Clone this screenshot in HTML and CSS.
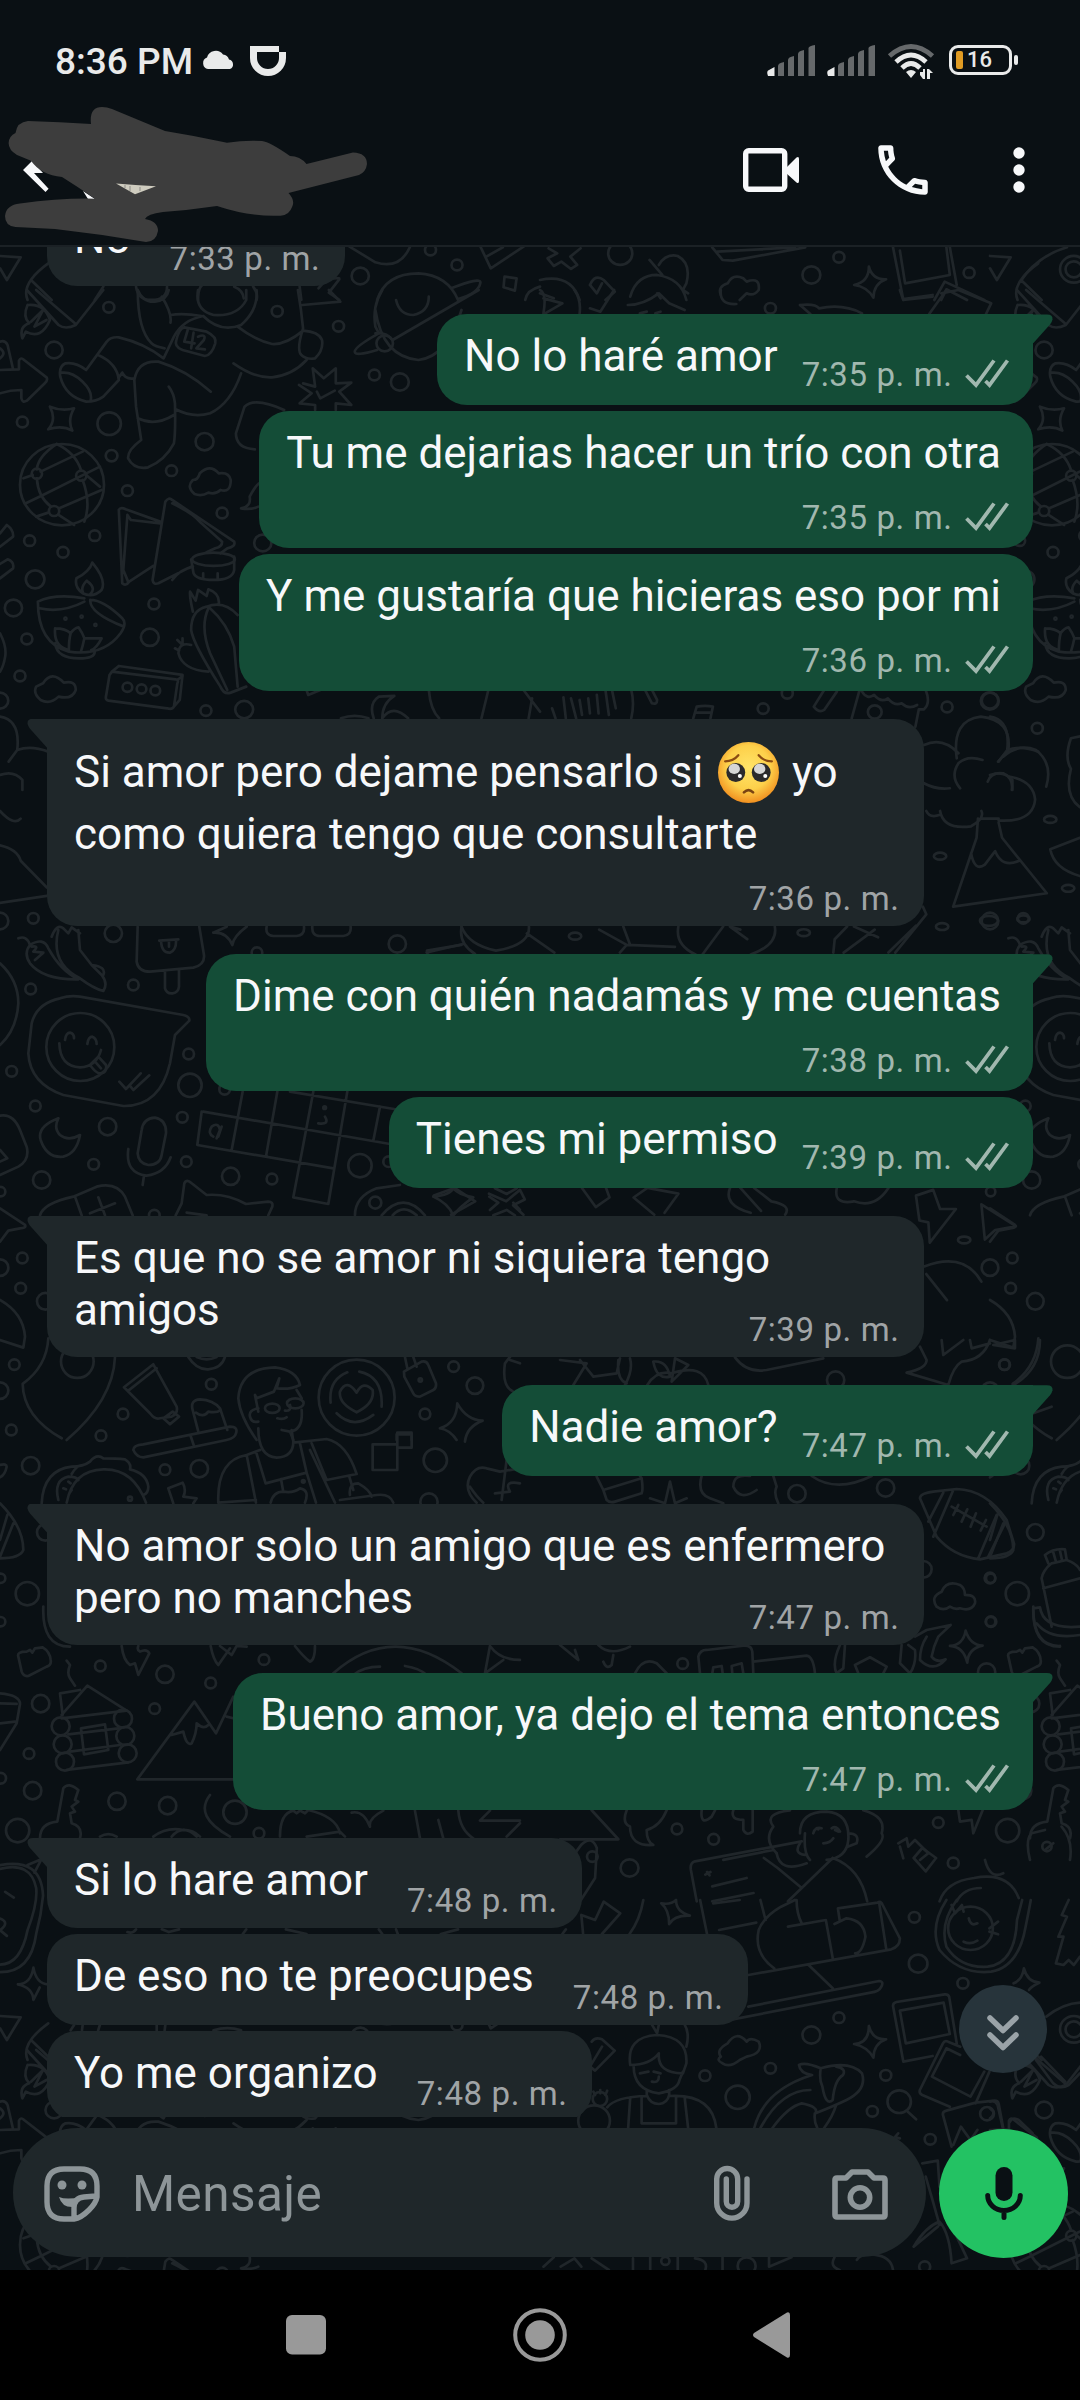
FILE: index.html
```html
<!DOCTYPE html>
<html lang="es">
<head>
<meta charset="utf-8">
<title>Chat</title>
<link rel="stylesheet" href="styles.css">
</head>
<body>
<div class="phone">
  <header class="top">
    <div class="status">
      <div class="status-left">
        <span class="clock">8:36 PM</span>
        <svg class="cloud" width="33" height="19" viewBox="0 0 33 19"><path d="M6 19a6 6 0 0 1-1-11.500 9 9 0 0 1 16-3 7 7 0 0 1 6 5A5 5 0 0 1 28 19Z"/></svg>
        <svg class="didi" width="36" height="30" viewBox="0 0 36 30"><path fill-rule="evenodd" d="M0 0H29V6H36V12A18 18 0 0 1 0 12ZM7 6V12A11 11 0 0 0 29 12V6Z"/></svg>
      </div>
      <div class="status-right">
        <svg class="signal" width="49" height="31" viewBox="0 0 49 31"><g fill="#66696b"><path d="M11 31V21Q11 18 17 17V31Z"/><path d="M21 31V15Q21 12 27 11V31Z"/><path d="M31 31V9Q31 6 37 5V31Z"/><path d="M41.500 31V3Q42 1 48 0V31Z"/></g><path d="M1 31Q-1 26 2 25L7.500 22V31Z"/></svg>
        <svg class="signal" width="49" height="31" viewBox="0 0 49 31"><g fill="#66696b"><path d="M11 31V21Q11 18 17 17V31Z"/><path d="M21 31V15Q21 12 27 11V31Z"/><path d="M31 31V9Q31 6 37 5V31Z"/><path d="M41.500 31V3Q42 1 48 0V31Z"/></g><path d="M1 31Q-1 26 2 25L7.500 22V31Z"/></svg>
        <svg class="wifi" width="46" height="35" viewBox="0 0 46 35"><g fill="none" stroke-width="4.800"><path stroke="#66696b" d="M1.500 12Q23-7 44.500 12"/><path stroke="#e9eaea" d="M8 18Q23 4 38 18M14 24Q23 15 32 24"/></g><path d="M23 34L18 28Q23 24 28 28ZM32 28h3v-3h2v10h-2l-3-4ZM39 35v-10h2l4 4h-3v6Z"/></svg>
        <div class="battery"><i class="charge"></i><span>16</span></div>
      </div>
    </div>
    <div class="bar">
      <svg class="act" width="56" height="44" viewBox="0 0 56 44"><rect x="2.700" y="2.700" width="39" height="38.600" rx="3" fill="none" stroke="#f7f8fa" stroke-width="5.400"/><path d="M43 20L53.500 9.500Q56 8 56 11V33Q56 36 53.500 34.500L43 25Z"/></svg>
      <svg class="act call" width="66" height="66" viewBox="0 0 24 24"><path d="M6.540 5c.06.89.21 1.760.45 2.590l-1.200 1.200c-.41-1.200-.67-2.470-.76-3.790h1.510m9.860 12.020c.85.24 1.720.39 2.600.45v1.490c-1.320-.09-2.590-.35-3.800-.75l1.200-1.190M7.500 3H4c-.55 0-1 .45-1 1 0 9.390 7.610 17 17 17 .55 0 1-.45 1-1v-3.490c0-.55-.45-1-1-1-1.240 0-2.450-.2-3.570-.57-.1-.04-.21-.05-.31-.05-.26 0-.51.1-.71.29l-2.200 2.200c-2.830-1.450-5.150-3.760-6.590-6.590l2.200-2.200c.28-.28.36-.67.25-1.020C8.700 6.450 8.500 5.250 8.500 4c0-.55-.45-1-1-1z"/></svg>
      <svg class="act" width="12" height="46" viewBox="0 0 12 46"><circle cx="6" cy="6" r="5.700"/><circle cx="6" cy="23" r="5.700"/><circle cx="6" cy="40" r="5.700"/></svg>
    </div>
    <svg class="scribble" width="380" height="246" viewBox="0 0 380 246">
      <path fill="#f7f8fa" d="M23 170L32 161L43 173H34L48.600 188.700L45.500 192ZM83 191L95 199H88Z"/>
      <path fill="#3d3d3d" d="M15.500 133Q17 122 28 121Q60 122 91 124Q89 107 102 107Q107 107 112 109L165 131Q196 136 227 142.700Q245 140 262 141Q270 142 290 156Q300 156 306.500 164L353 152.500Q367 153 367 164Q366 172 359 175L288.500 193Q295 200 292.500 206Q289 216 280 215.700Q250 217 217 206Q190 210 163 212Q147 214 145 219Q158 221 158 231Q156 242 146 242Q100 234 55 229L15.500 227Q5 226 5 216Q6 205 20 203.500Q60 198 95 198.700Q78 187 62 177Q41 175 31 160.700L17 155Q8.600 150 8.600 143Q9 136 15.500 133Z"/>
      <path fill="#cfccbf" d="M116 183.500Q135 185 156 186.300L135 194.300Z"/><path stroke="#8d8b86" d="M125 185v3M130 186v5M140 187v4"/>
    </svg>
  </header>

  <main class="conversation">
    <svg class="wallpaper" width="1080" height="2023" viewBox="0 247 1080 2023">
      <defs>
      <g id="runner">
        <g transform="scale(.3444 .3333)">
          <path d="M0 768L60 772L20 840L0 805M140 790Q60 850 80 900M90 840L150 900M395 860Q400 900 440 900Q485 900 485 860M300 860L275 900M575 900Q575 850 600 850M680 860Q705 870 708 895M735 860Q750 880 745 900M870 860L875 900M985 835Q950 830 925 865M985 838L955 878L985 900M1015 740L1090 787Q1160 810 1190 742M1395 740L1425 805L1520 740M1412 770L1460 742"/>
          <circle cx="1046" cy="828" r="25"/><circle cx="1250" cy="750" r="16"/><circle cx="1327" cy="795" r="16"/>
          <path d="M1095 900Q1120 820 1215 820Q1300 825 1330 900M1310 865Q1395 830 1395 848Q1390 880 1330 897M1465 830L1500 835L1495 872L1462 862ZM1525 900Q1530 870 1568 860"/>
        </g>
        <g transform="translate(0 290) scale(.3444 .3333)">
          <circle cx="316" cy="52" r="16"/><circle cx="157" cy="180" r="25"/><circle cx="805" cy="64" r="16"/><circle cx="983" cy="109" r="16"/><circle cx="1087" cy="255" r="16"/><circle cx="1161" cy="276" r="26"/><circle cx="65" cy="396" r="16"/><circle cx="317" cy="401" r="34"/><circle cx="324" cy="497" r="17"/><circle cx="594" cy="455" r="26"/><circle cx="498" cy="542" r="16"/><circle cx="370" cy="602" r="16"/><circle cx="645" cy="669" r="16"/><circle cx="763" cy="759" r="25"/><circle cx="86" cy="752" r="16"/><circle cx="275" cy="737" r="16"/><circle cx="183" cy="787" r="16"/><circle cx="102" cy="868" r="27"/><circle cx="39" cy="954" r="25"/><circle cx="447" cy="942" r="16"/><circle cx="435" cy="1042" r="26"/><circle cx="78" cy="1047" r="16"/><circle cx="58" cy="1158" r="16"/><circle cx="598" cy="1262" r="16"/><circle cx="709" cy="1259" r="26"/><circle cx="0" cy="1232" r="24"/>
          <path d="M78 0L170 105Q190 120 220 105L300 0M105 0L220 102M80 45Q130 40 145 90Q120 150 75 125L65 145Q55 110 85 100Q65 80 80 45M90 95L125 60L100 110L135 90"/>
          <path d="M0 155Q15 150 22 165L38 238M0 205Q20 190 0 175M0 240Q30 238 55 238V212Q60 200 70 210L135 262Q140 270 130 280L78 332Q65 340 62 325V300Q30 300 0 310"/>
          <path d="M400 0Q400 120 440 160Q450 170 478 175M470 20Q500 70 495 98M400 0Q415 38 450 35Q485 30 490 0M495 75Q530 68 585 78M590 78Q530 90 505 140L475 205Q420 160 345 142Q320 140 310 155L250 240Q220 215 190 220Q170 230 175 260Q190 320 250 335Q280 335 300 320L345 270M285 195Q340 220 345 270M180 248Q210 245 240 275Q270 305 263 332M355 248L345 262M355 248Q365 270 390 265M575 0Q565 60 620 75Q690 80 715 30V0M745 0Q750 60 700 105Q640 130 590 78M690 110Q740 150 790 162Q830 165 880 122M865 0Q875 60 880 115Q860 180 875 195Q890 210 915 205Q940 180 935 150Q925 125 880 122M955 0L988 35L878 45M678 220Q740 265 790 262Q850 255 890 210M700 250Q670 340 610 370Q560 385 510 358M390 270Q400 210 460 215Q540 240 612 305M390 270L395 350L410 450Q370 480 372 505Q390 540 430 532Q480 510 505 460Q510 430 508 340Q505 310 490 290M400 385Q450 410 505 375"/>
          <path d="M535 112L600 125Q630 140 625 160Q615 195 595 198L530 180Q505 170 512 150Q520 115 535 112M545 120L535 155L565 160M562 128L555 175M575 140Q600 130 592 150L570 175L595 178"/>
          <path d="M880 280L915 290L908 235L940 265L975 235V280L1020 278L985 305L1020 345L975 340V360M915 360V345L870 340L905 310L868 285M920 305L930 325L972 302M1090 60Q1110 200 1215 210Q1300 200 1340 60M1110 0Q1080 50 1090 110L1100 130Q1030 170 1030 185Q1030 200 1095 180M1090 130Q1120 125 1140 150L1390 0M1150 30Q1160 75 1200 75Q1245 65 1245 20"/>
          <circle cx="1117" cy="160" r="24"/><circle cx="180" cy="584" r="122"/>
          <path d="M145 350Q180 365 215 355Q195 390 210 422Q180 405 140 418Q165 390 145 350M68 565L95 555M118 545L240 485M75 640L125 615L290 530M105 680L140 668M172 655L295 600M165 462Q110 500 107 538M107 565Q110 620 148 650M165 462Q220 490 235 540M240 570Q265 640 245 695M170 675L215 705M250 555L290 590"/>
          <circle cx="107" cy="551" r="15"/><circle cx="236" cy="557" r="15"/><circle cx="157" cy="663" r="15"/>
          <path d="M565 612Q540 590 560 570Q575 570 580 550Q610 520 635 550Q665 545 670 570Q670 610 640 600Q625 615 605 608Q585 620 565 612M825 360Q740 320 710 350L685 430Q685 475 740 478M700 655Q730 650 725 620Q740 590 752 580M700 655Q730 660 750 650M345 660Q350 650 365 658L465 695M345 660L355 880Q365 890 375 875L445 828M480 635Q490 620 500 630L680 755Q685 770 660 775L640 790M480 635L443 870Q445 885 460 880L555 830M370 675L380 690L465 700M370 675L358 840L372 875M500 640Q560 670 580 695L645 755Q645 770 625 775L600 787M500 870Q520 840 560 830"/>
          <ellipse cx="620" cy="808" rx="62" ry="20"/>
          <path d="M555 808L562 850Q570 870 620 870Q675 870 680 840V800M590 850V865M632 850V868M0 730L20 705Q40 720 38 740L0 770M0 822L22 808Q42 815 38 835L0 865M268 818Q310 870 295 900Q270 925 240 910Q215 890 222 865Q260 845 268 818M252 872Q235 890 240 905M255 875Q280 895 262 913M110 935Q160 910 245 925M110 935Q110 1060 200 1085Q300 1100 350 1030Q370 1000 355 985Q300 930 262 930M115 955Q180 970 245 935M262 930Q260 970 360 1010M160 1060Q165 1105 230 1105Q275 1105 275 1085M160 1015Q190 1015 205 1030Q215 1015 228 1012Q240 1030 245 1045L295 1045Q280 1075 265 1080M160 1015Q155 1070 200 1080Q200 1050 205 1030M245 1045Q240 1070 235 1085M560 965Q550 920 552 905L568 932L575 900L600 918L605 898Q640 910 635 945M690 975Q650 930 600 950Q555 960 555 1020Q560 1060 640 1190Q650 1215 670 1208L715 1190M605 955Q580 1010 610 1090L660 1200M610 955Q660 1000 680 1070L690 1190M555 1065Q520 1055 518 1090Q530 1140 605 1145M515 1050L530 1065M508 1075L520 1082M530 1045V1060M118 1230Q95 1210 105 1190L125 1180Q150 1140 185 1178Q220 1170 220 1200Q210 1230 170 1220Q145 1245 118 1230M325 1145L510 1168Q520 1170 515 1180L505 1250Q500 1260 485 1255L315 1232Q305 1230 308 1218L318 1155ZM325 1145L345 1128L530 1155L522 1230L505 1250M530 1158L515 1170"/>
          <circle cx="190" cy="986" r="3"/><circle cx="237" cy="980" r="3"/><circle cx="277" cy="1005" r="3"/><circle cx="370" cy="1192" r="14"/><circle cx="411" cy="1197" r="14"/><circle cx="451" cy="1202" r="14"/>
          <path d="M0 1030Q20 1070 15 1100Q10 1130 0 1145M0 1280Q60 1290 50 1380Q90 1365 140 1385M25 1415L50 1380M0 1455Q40 1440 65 1470V1500M890 1200L895 1215L930 1200M1085 1285Q1070 1240 1100 1220L1145 1218Q1110 1240 1110 1285M1110 1285Q1140 1240 1185 1285M990 1285Q1030 1270 1070 1285M1245 1200Q1250 1260 1275 1285M1418 1200L1398 1285M1520 1200L1568 1265M1545 1225L1535 1285"/>
        </g>
      </g>
      <g id="gap1" transform="translate(0 920) scale(.3333)">
        <circle cx="0" cy="3" r="25"/><circle cx="100" cy="-5" r="16"/><circle cx="340" cy="40" r="26"/><circle cx="92" cy="207" r="16"/><circle cx="400" cy="195" r="16"/><circle cx="35" cy="454" r="16"/><circle cx="106" cy="558" r="16"/><circle cx="323" cy="620" r="26"/><circle cx="281" cy="733" r="16"/><circle cx="125" cy="780" r="26"/><circle cx="566" cy="402" r="16"/><circle cx="570" cy="496" r="35"/><circle cx="547" cy="592" r="16"/><circle cx="559" cy="725" r="16"/><circle cx="692" cy="769" r="26"/><circle cx="816" cy="777" r="16"/><circle cx="1080" cy="737" r="35"/><circle cx="1166" cy="725" r="16"/><circle cx="674" cy="508" r="16"/><circle cx="771" cy="98" r="16"/><circle cx="1192" cy="72" r="26"/><circle cx="463" cy="886" r="16"/><circle cx="1126" cy="848" r="18"/><circle cx="67" cy="1014" r="16"/><circle cx="0" cy="1043" r="25"/><circle cx="62" cy="1105" r="16"/><circle cx="136" cy="1144" r="25"/><circle cx="43" cy="1334" r="16"/><circle cx="0" cy="1412" r="25"/><circle cx="634" cy="1393" r="16"/><circle cx="369" cy="1482" r="16"/><circle cx="34" cy="1530" r="16"/><circle cx="1425" cy="1397" r="25"/><circle cx="1361" cy="1340" r="16"/><circle cx="1275" cy="1482" r="16"/><circle cx="232" cy="1325" r="49"/><circle cx="241" cy="381" r="102"/><circle cx="1070" cy="1433" r="114"/><circle cx="2" cy="815" r="14"/>
        <path d="M0 130Q55 180 55 250Q50 330 0 375M175 30Q150 130 240 175Q280 205 310 213Q325 190 305 165L275 135L240 90L235 30M155 50Q170 10 190 25L205 40L215 22L240 40M55 55Q80 45 90 75M90 75Q130 50 145 85Q180 150 235 178M90 75Q70 100 90 130Q130 180 235 178M95 80Q120 75 100 95L130 98L105 120M275 135Q320 140 310 165M413 20L410 125Q415 155 450 155L580 143Q615 135 612 105L598 20M478 62L535 58M483 62Q485 100 510 98Q530 90 528 60M507 62V80M495 155V205Q500 222 518 220Q535 218 537 200V150M640 38L680 20M640 38Q680 35 697 75Q700 50 740 20M800 20Q795 45 820 48H890Q915 45 912 20M937 20Q935 48 960 48H1030Q1055 45 1052 20M1280 97L1390 72M1385 20Q1375 70 1425 102M1280 97L1285 104"/>
        <path d="M180 235Q210 225 240 230L550 285Q570 290 568 302L525 345L510 430Q480 560 370 558L190 525Q90 490 85 400L95 310Q110 250 180 235M195 360Q198 338 210 338Q222 340 222 355M262 372Q265 350 277 350Q290 355 290 372M178 370Q180 440 240 442Q290 440 303 390M270 435L295 410L318 435Q322 460 300 460Q290 462 270 435M285 425L303 445M358 485L378 507L422 460M392 500L400 510L448 466M175 595Q110 620 122 660Q140 715 190 710Q230 700 240 645Q205 665 180 645Q160 625 175 595M425 630Q430 595 465 593Q500 600 498 640L485 705Q480 735 445 735Q415 730 413 700ZM385 687Q375 760 440 767Q495 760 512 712M432 767L428 795M0 587Q40 580 60 630L80 680Q90 720 55 740L0 765M0 690L22 715L0 725M610 575L1170 672M592 675L1000 745M605 575L592 675M728 515L695 690M832 515L798 710M940 515L880 832L985 852L1042 515M870 515L1200 570M1140 560L1120 662M640 650Q622 640 635 620Q655 605 660 630L650 655M665 620L655 650M975 590Q990 615 955 610"/>
        <circle cx="974" cy="563" r="4"/>
        <path d="M120 886Q130 850 220 830L290 800Q350 785 375 830L398 886M225 830L245 886M295 832L315 886M270 880L345 850M0 865L75 915Q80 925 60 925L25 932L0 965M0 1140Q70 1180 75 1250L70 1283L0 1260M527 886L545 850L553 790Q560 775 575 790L620 825Q680 820 738 852L805 845Q820 845 817 860L805 886M560 878L620 886M1065 886Q1065 830 1130 805L1200 795M1145 886Q1210 810 1275 886M1178 886Q1210 850 1250 886M1300 830Q1350 825 1360 805Q1375 825 1420 832Q1380 860 1360 886Q1345 850 1300 830M1468 830L1495 848L1470 870M1485 805L1520 822L1550 805M1540 848L1560 870M1480 886L1520 870L1545 886M145 1255Q140 1340 68 1392Q70 1490 185 1555M345 1311Q340 1440 200 1560M372 1402L460 1333L530 1460Q535 1480 515 1490L480 1495Q465 1500 450 1480ZM385 1412L470 1345M490 1495L518 1475L537 1490L510 1513ZM565 1311Q590 1350 625 1348Q665 1345 675 1311M590 1311Q620 1325 650 1311M578 1470Q570 1440 600 1438Q640 1440 660 1465L682 1530M578 1470L595 1535M588 1478Q610 1495 625 1475Q650 1480 662 1470M715 1435Q720 1345 825 1342Q890 1350 900 1395Q870 1410 830 1405L838 1375L822 1415L770 1435L765 1425L775 1475M775 1465Q745 1470 750 1490Q755 1510 775 1505M715 1435Q720 1490 770 1560M890 1410L905 1435M905 1470Q910 1530 870 1535L845 1530M832 1495Q850 1500 860 1492M870 1535L880 1560M870 1455Q875 1475 855 1472"/>
        <ellipse cx="817" cy="1465" rx="22" ry="14"/><ellipse cx="886" cy="1450" rx="25" ry="15"/>
        <path d="M1070 1477Q1015 1450 1020 1415Q1040 1375 1070 1418Q1090 1380 1118 1410Q1125 1450 1070 1477M992 1448Q985 1380 1042 1357M1078 1355Q1150 1370 1145 1460M1010 1480Q1060 1530 1120 1485M1215 1311L1222 1345M1240 1311L1250 1340M1212 1355L1265 1325Q1280 1322 1285 1335L1308 1390Q1310 1405 1300 1410L1260 1430Q1245 1430 1240 1420L1213 1370ZM1320 1525Q1370 1510 1372 1450Q1400 1500 1448 1502Q1400 1520 1395 1565M1370 1560Q1350 1530 1320 1525M1530 1311L1515 1330Q1505 1400 1540 1415M1530 1320L1560 1330M1190 1560V1543H1235V1560"/>
        <circle cx="1261" cy="1380" r="5"/>
      </g>
      <g id="gap2" transform="translate(0 1400) scale(.3333)">
        <circle cx="303" cy="107" r="16"/><circle cx="92" cy="197" r="26"/><circle cx="495" cy="209" r="16"/><circle cx="598" cy="206" r="26"/><circle cx="1306" cy="181" r="35"/><circle cx="1287" cy="306" r="26"/><circle cx="82" cy="581" r="35"/><circle cx="2" cy="535" r="14"/><circle cx="2" cy="665" r="14"/><circle cx="136" cy="397" r="25"/><circle cx="301" cy="798" r="16"/><circle cx="495" cy="823" r="26"/><circle cx="632" cy="849" r="16"/><circle cx="464" cy="926" r="16"/><circle cx="792" cy="779" r="16"/><circle cx="122" cy="911" r="26"/><circle cx="87" cy="1061" r="16"/><circle cx="2" cy="1135" r="16"/><circle cx="98" cy="1172" r="26"/><circle cx="351" cy="1204" r="26"/><circle cx="503" cy="1217" r="26"/><circle cx="705" cy="1237" r="35"/><circle cx="777" cy="1300" r="16"/><circle cx="53" cy="1292" r="35"/><circle cx="182" cy="979" r="27"/><circle cx="188" cy="1033" r="27"/><circle cx="195" cy="1085" r="27"/><circle cx="369" cy="956" r="27"/><circle cx="376" cy="1008" r="27"/><circle cx="383" cy="1060" r="27"/><circle cx="390" cy="296" r="6"/><circle cx="910" cy="244" r="4"/>
        <path d="M400 150Q400 135 430 133L690 80Q715 80 708 100Q705 115 680 120L430 172Q410 172 400 150M572 108L582 138M775 85Q775 170 830 173Q880 170 880 125L875 90M125 310Q130 210 215 200Q250 200 270 185Q290 160 310 175Q350 175 375 178Q395 190 390 208Q440 220 445 260Q445 280 430 285M215 222Q230 195 250 195M200 308Q220 210 310 208Q400 205 438 308M175 300Q160 240 205 230Q230 230 235 240M205 245L212 250M190 265L198 268M215 270L208 280M505 265L548 248Q560 270 550 290L590 295L580 310M505 265L520 310M655 308Q650 180 740 165L780 150M740 165L768 308M768 155L797 250L920 218L900 130M880 128L980 117Q1040 130 1070 222L980 240L935 130M920 218L948 308M930 150L1005 308M1048 230L1060 270M843 237L850 275Q880 280 900 265Q930 270 915 308M812 308Q820 275 850 275M655 308L768 300M1050 285Q1045 250 1075 250Q1110 270 1115 290M1020 300L1130 285Q1170 280 1180 308M1118 133H1192V210H1118ZM1192 98H1235V143H1192ZM1410 230Q1430 195 1460 205L1500 215L1560 205M1410 230Q1390 270 1430 308M1410 260Q1430 290 1450 308M1520 180L1505 300M1485 280L1530 275Q1510 240 1560 250M0 195Q20 190 20 200Q15 225 0 232M0 310Q70 380 70 450Q60 475 0 475M40 370L0 470M22 345L0 420M130 620Q125 740 210 740M55 770Q50 755 80 755L90 750L97 758L105 745L128 742Q150 755 152 780Q155 795 140 800L85 828Q70 830 65 815ZM200 782L210 795Q200 820 210 835L225 857M180 880L240 870M180 880L188 945M185 945L262 857L380 932L185 955M205 1003L355 985M210 1055L360 1035M200 1110L385 1087M243 985L315 973L325 1050L252 1063ZM0 880Q60 885 60 912L50 970L0 1050M0 910L50 912M0 970L45 965M365 738Q370 780 390 795L405 790L415 825L448 760Q440 745 420 755Q410 750 415 738M632 738Q640 780 655 795L690 745M660 738L695 765L710 738L740 740M885 738Q910 770 930 785Q945 780 945 738M1000 820Q1180 660 1385 820M1060 825Q1090 800 1140 800M1215 798Q1260 805 1280 825M1470 738Q1500 780 1560 780M1470 738L1455 820M1455 820L1510 780M412 1138H720M412 1138L583 905L648 1000L700 890M515 1005L550 995Q560 1040 575 1030Q590 1000 590 970Q610 990 625 975M680 950L700 955M190 1165Q205 1145 235 1170L225 1200L235 1205L215 1220L225 1235L210 1240L215 1270Q250 1280 240 1315M190 1165L172 1265Q120 1270 120 1315M630 1185Q580 1250 690 1310M840 1310Q840 1240 880 1232L890 1240L900 1232L915 1240L925 1230Q1010 1250 1020 1300M920 1310L1020 1295L1035 1310M1055 1238Q1090 1230 1110 1280Q1105 1255 1150 1232M1245 1232L1260 1315M1315 1260L1330 1315M1375 1232Q1380 1290 1420 1315M1440 1262H1560M1440 1262L1470 1232M1520 1310L1560 1270M460 1310Q500 1280 550 1290Q580 1290 600 1310M515 1310Q550 1270 590 1310M300 1310Q325 1295 350 1310"/>
      </g>
      </defs>
      <use href="#runner"/><use href="#runner" x="990"/><use href="#runner" y="1760"/><use href="#runner" x="990" y="1760"/>
      <use href="#gap1"/><use href="#gap1" x="990"/>
      <use href="#gap2"/><use href="#gap2" x="990"/>
      <g transform="translate(540 0) scale(.3444 .3333)">
        <circle cx="233" cy="760" r="35"/><circle cx="788" cy="825" r="26"/><circle cx="868" cy="772" r="16"/><circle cx="1246" cy="818" r="16"/><circle cx="1550" cy="808" r="40"/><circle cx="1550" cy="808" r="24"/>
        <path d="M25 745L50 760L22 775L40 798L62 785L90 807L108 795L88 770L118 745M0 840Q90 820 115 900M0 880L40 895M145 855Q160 820 185 840L217 875L190 900M145 855L165 880L180 850M262 890Q280 825 340 825Q410 835 425 900M318 780L355 825M345 795Q365 760 400 768Q440 790 425 850L415 870L430 880M340 880L350 895M525 885Q515 860 545 850Q560 820 590 835L600 845Q640 830 635 870Q620 890 600 880L580 900M500 742L530 780L560 782L770 742M515 755L740 742M955 800Q965 840 1005 838Q970 850 968 893Q950 860 912 855Q955 845 955 800M1025 742L1055 900M1045 752L1060 850L1190 825L1180 742M1190 742L1210 855M1055 897L1140 885M1145 900L1175 845L1290 900M1165 900L1180 868L1240 900M1395 845Q1440 770 1530 742"/>
      </g>
      <g transform="translate(540 290) scale(.3444 .3333)">
        <circle cx="669" cy="55" r="16"/><circle cx="718" cy="1210" r="16"/><circle cx="648" cy="1256" r="16"/><circle cx="972" cy="1266" r="20"/><circle cx="1182" cy="1251" r="16"/><circle cx="1306" cy="1233" r="26"/><circle cx="1444" cy="1315" r="16"/>
        <path d="M0 0Q20 10 10 70M10 25L65 40L15 70M100 0Q120 30 115 70M145 55L175 65L215 0M255 45Q300 45 345 10L375 40L420 60M290 70L310 65M335 70L350 65M525 0Q520 45 570 42M755 45Q800 40 810 55Q880 40 935 70M755 45L785 72M1045 0L1055 30L1140 20M1130 72L1180 0M1165 10L1215 0L1310 40L1295 72M35 1255L45 1285M68 1222L75 1285M90 1225L105 1285M115 1230L122 1275M140 1225L145 1270M165 1215L170 1270M190 1200L200 1275M210 1205L220 1255M265 1200Q275 1240 265 1285M305 1200L325 1240Q340 1245 340 1230L325 1200M445 1285L455 1250Q480 1245 502 1250L495 1285M455 1268H498M825 1200L795 1250Q810 1270 825 1260L862 1205M928 1200L905 1285M935 1205Q950 1230 970 1215Q990 1240 1010 1225Q1030 1250 1050 1240Q1070 1260 1095 1245M1120 1200Q1135 1240 1115 1258H1100L1090 1310M1210 1405Q1195 1290 1280 1280Q1370 1290 1360 1380L1330 1415M1285 1410Q1240 1395 1215 1420Q1190 1460 1220 1495M1115 1365Q1170 1340 1215 1390M1345 1400Q1390 1360 1440 1380Q1490 1420 1470 1490M1300 1475Q1310 1445 1345 1450Q1375 1465 1370 1500M1115 1480Q1150 1500 1190 1495"/>
      </g>
      <g transform="translate(0 700) scale(.6887 .3827)">
        <path d="M0 290Q20 330 30 310M0 380Q25 390 30 420L68 490M0 530L68 512M1345 290Q1350 310 1365 300M1365 290Q1370 340 1410 330Q1430 310 1425 290M1425 310H1450M1450 315Q1500 320 1503 260Q1500 210 1465 200M1420 310L1418 360L1384 540L1520 505L1455 360L1450 320M1410 400Q1415 450 1430 430L1445 395Q1455 440 1480 420M1568 460Q1530 440 1525 390L1568 360M1340 540L1345 560L1300 660M1230 592L1212 625L1210 660M1270 600L1225 660M1330 590L1290 660M1240 592L1275 620M1568 95L1555 100Q1545 150 1555 180Q1545 250 1568 280M985 592Q980 640 1010 665M1125 592Q1130 640 1090 665M1050 592L1020 665M1060 592L1085 625M670 592Q680 640 720 655Q770 640 768 592M765 610L805 660M620 655L670 640M870 600L910 640L980 645M905 592L915 640M910 640L900 660M1060 592L1075 600"/>
        <circle cx="1365" cy="408" r="9"/><circle cx="1525" cy="312" r="9"/><circle cx="1551" cy="492" r="9"/><circle cx="1436" cy="577" r="13"/><circle cx="1486" cy="572" r="9"/><circle cx="1368" cy="592" r="9"/><circle cx="835" cy="617" r="9"/><circle cx="1167" cy="608" r="9"/><circle cx="1400" cy="1411" r="9"/>
        <path d="M1330 1295L1355 1280L1365 1330H1388L1350 1418L1348 1365L1335 1360ZM1425 1318L1475 1375L1445 1385L1430 1410ZM630 1295L660 1275L690 1310L655 1345M710 1290L735 1310L755 1280L762 1305L745 1320L760 1345M845 1275L865 1325L885 1300L880 1275M920 1300L940 1275L985 1290L965 1340M920 1300L950 1345M1060 1275Q1050 1320 1090 1340M1075 1275L1105 1335M1095 1275L1120 1310Q1150 1320 1140 1345M1215 1275Q1210 1320 1240 1310Q1270 1330 1290 1275M1342 1480Q1400 1440 1425 1520M1345 1500L1375 1568"/>
      </g>
      <g transform="translate(560 1340) scale(.3333)">
        <circle cx="1334" cy="74" r="16"/><circle cx="827" cy="120" r="26"/><circle cx="711" cy="461" r="26"/><circle cx="977" cy="444" r="26"/><circle cx="1290" cy="714" r="16"/><circle cx="1293" cy="845" r="16"/><circle cx="1090" cy="688" r="25"/><circle cx="1280" cy="996" r="26"/><circle cx="368" cy="971" r="16"/><circle cx="351" cy="1467" r="16"/><circle cx="461" cy="1498" r="16"/><circle cx="1135" cy="1448" r="16"/><circle cx="97" cy="1550" r="16"/>
        <path d="M1040 98Q1100 85 1100 60L1080 20M1040 98L1165 135Q1180 80 1205 65Q1270 60 1290 0M1145 0L1150 45L1210 0M1230 0L1235 25L1290 10M1300 15L1365 0V25L1300 15M1440 0Q1440 90 1360 135M1475 200L1420 220M1080 475Q1080 460 1120 455L1190 447Q1280 450 1340 540L1362 610Q1365 630 1340 640L1260 658Q1180 650 1130 590ZM1150 458L1105 545M1180 450L1120 590M1310 525L1255 655M1335 550L1285 650M1175 500L1280 560M1195 495L1180 525M1222 508L1205 545M1248 520L1232 560M1278 540L1262 572M1130 800Q1110 770 1145 755Q1160 720 1200 735Q1215 745 1215 765Q1250 765 1245 790Q1235 815 1200 805Q1185 810 1170 800Q1150 815 1130 800M1065 890L1100 870L1172 855L1135 890Q1120 920 1115 950Q1130 970 1157 958Q1120 1000 1080 960Q1080 920 1100 890M1170 918Q1210 915 1217 872Q1230 915 1268 917Q1225 925 1222 968Q1210 920 1170 918M420 1000L415 950Q420 930 440 930L550 917Q575 915 577 935L580 1000M580 965L740 947Q760 950 765 1000M457 1000L460 982L485 978L488 1000M517 1000L515 978L545 970L550 1000M225 1000Q250 950 290 970L320 1000M0 915L55 960L45 930M115 915Q150 950 210 920M130 965Q140 990 155 975L160 945M840 915Q815 970 830 1000M855 915L850 985L832 998M885 975L930 952L980 980L970 1000M885 975L895 1000M1025 915L1020 970L1050 1000Q1070 970 1065 930L1045 915M60 60L100 110L170 100L180 55M0 60L80 70L40 135M210 55Q220 90 195 135M175 60Q170 120 200 130M280 65Q320 60 330 110Q290 120 280 65M335 125L345 55L385 75L335 125M262 135Q290 90 335 100Q430 70 445 135M525 52Q560 100 620 90L790 55M110 410L130 450L245 415L240 408M130 450L140 480Q150 490 165 485L245 460Q250 450 245 415M270 475L315 490L330 425L345 490L380 475M425 408Q410 460 450 475L490 490M640 408L650 440Q640 460 655 490M570 408Q520 400 520 440Q540 485 590 450M755 408Q830 460 935 408"/>
        <path d="M1445 715L1475 860M1445 715Q1450 690 1475 670L1520 660Q1550 670 1560 690M1450 745L1560 715M1455 645L1465 670M1455 645Q1480 625 1515 628L1520 658M1480 637L1488 665M1500 632L1506 660M1420 805Q1420 920 1500 918M1420 805L1440 802Q1450 870 1560 860M1430 850Q1470 900 1560 885M95 1411L175 1498H0M200 1411Q185 1450 210 1460Q210 1520 280 1515Q260 1505 260 1470Q300 1460 320 1411M425 1411Q420 1460 455 1430L465 1411M520 1411Q510 1440 550 1440V1470Q560 1490 578 1475V1411M690 1411Q610 1420 640 1460Q610 1500 650 1540M720 1480Q720 1415 800 1415Q870 1420 865 1500Q860 1555 800 1560M735 1480Q730 1540 750 1560M720 1510Q700 1540 735 1545M865 1480Q900 1480 890 1510L865 1520M770 1465L775 1468M825 1470L835 1475M790 1510Q810 1510 820 1495M910 1411Q980 1430 965 1480Q980 1500 920 1550M760 1480Q765 1460 785 1465M815 1465Q830 1455 840 1475M1015 1510L1040 1495L1045 1520M1045 1520L1065 1500L1105 1540L1080 1560M1020 1520L1030 1555M1195 1411L1200 1445L1235 1440L1240 1480L1268 1411M490 1560L640 1530"/>
        <path d="M1410 1560Q1395 1500 1415 1480L1455 1470M1530 1560Q1540 1500 1505 1460M650 1540Q660 1600 740 1570M1275 1560Q1290 1620 1330 1600M1455 1530L1480 1510"/>
        <circle cx="1461" cy="1520" r="14"/>
      </g>
      <g transform="translate(540 1838) scale(.3444 .3333)">
        <path d="M450 70L760 10M450 70Q435 75 438 95L455 190M0 190L120 20Q150 -10 165 30L160 120L110 200M650 60L690 90L760 150L850 60M760 150L720 190M850 60Q930 90 950 190M480 110L495 102M485 102L492 112M500 145L600 120M500 190L620 165M1110 30L1150 60L1120 100L1085 60ZM1160 190Q1180 130 1260 120Q1360 100 1390 180M1210 190Q1230 150 1280 150"/>
        <circle cx="260" cy="90" r="26"/><circle cx="1200" cy="75" r="16"/>
      </g>
      <g transform="translate(0 1800) scale(.3444 .3827)">
        <path d="M0 170Q120 150 125 250Q120 300 105 350Q90 450 0 450M0 180Q90 160 105 230Q110 270 80 340Q60 430 0 430M80 170L120 155L100 190M15 240L40 255M0 310Q30 320 0 340L20 355M52 482Q90 480 97 438Q105 480 140 482M97 522Q95 490 52 482M97 522L115 490M370 345Q385 350 395 338M470 338L490 345L520 338M705 350L715 338M830 338L890 350M1100 338L1110 350M1150 338L1155 350M1280 350L1330 338M215 588L205 602M240 588L238 602M290 588L285 602M455 588V602M480 588L478 602M620 602Q660 590 700 602"/>
      </g>
      <g transform="translate(540 1900) scale(.3444 .3333)">
        <circle cx="1087" cy="52" r="16"/><circle cx="1098" cy="191" r="27"/><circle cx="1228" cy="250" r="16"/><circle cx="868" cy="353" r="16"/><circle cx="788" cy="405" r="26"/><circle cx="669" cy="505" r="16"/><circle cx="479" cy="527" r="16"/><circle cx="574" cy="592" r="35"/><circle cx="1004" cy="526" r="16"/><circle cx="965" cy="634" r="16"/><circle cx="1043" cy="605" r="34"/><circle cx="1133" cy="718" r="16"/><circle cx="1298" cy="641" r="20"/><circle cx="174" cy="597" r="21"/><circle cx="157" cy="662" r="46"/><circle cx="1117" cy="1100" r="16"/><circle cx="600" cy="1098" r="26"/><circle cx="1250" cy="85" r="65"/><circle cx="364" cy="1083" r="12"/>
        <path d="M120 45L125 100M120 45L160 60L185 5L233 40L180 102M65 102L75 88M300 0Q290 60 260 102M352 10Q380 15 395 0Q395 35 435 47Q390 45 375 72Q375 30 352 10M465 0L485 102M520 90L628 68M503 10L580 0M640 0L655 60M745 0Q745 40 760 70M865 25L980 8Q990 0 995 15L1045 115Q1045 140 1020 148L605 225M870 60L865 25M985 10L1005 145M830 60L720 80M830 60L850 175M855 72L890 55Q940 60 945 110Q935 160 915 160M680 205Q620 160 635 90Q650 50 700 20L740 0M780 195L850 265M605 320L985 243Q1000 245 990 262Q985 275 960 278L560 358M150 425Q160 410 180 418L217 452L160 512L145 500L180 440M262 495Q250 410 340 405Q430 410 425 490L415 520Q340 520 345 460Q320 495 262 495M272 495Q270 570 345 580Q400 570 405 540L415 515M290 520L315 515M330 515L350 520M325 545Q345 550 345 530M310 570V585Q320 612 345 612Q370 610 375 585V570M195 622Q220 590 310 588M375 588Q500 580 512 684M262 592L256 684M420 592L430 684M295 592V670H395V590M325 374L340 400L345 374M420 374Q435 400 425 440M155 575L160 585M175 570V580M195 572L190 585M525 470Q510 480 530 490Q550 505 580 480L600 470Q650 460 635 425Q610 410 600 425Q570 390 545 430Q510 450 525 470M955 378Q965 420 1005 418Q970 430 968 473Q950 440 912 432Q955 430 955 378M1025 318Q1025 308 1035 306L1175 283Q1185 282 1188 290L1210 430M1025 318L1055 485L1140 468M1045 332L1172 308L1190 402L1062 430ZM1170 430Q1175 420 1185 425L1220 440M1170 430L1103 570Q1100 580 1110 585L1190 620M1180 445L1220 465M1180 445L1138 530L1250 590L1290 515M1265 610L1305 515M1265 608L1320 602Q1330 602 1332 612L1345 684M1195 740L1170 645Q1168 635 1180 632L1265 608M1200 735L1222 680L1250 720L1270 690M1068 635L1092 658M752 495Q770 485 815 505Q900 480 935 520Q950 570 890 600Q860 615 800 640Q810 620 760 610Q720 620 675 684M752 495Q755 520 790 525Q650 570 622 684M785 570Q700 570 640 684M815 505Q810 540 820 560Q830 620 850 600Q855 540 880 525Q890 505 860 500M798 640Q795 665 805 684M860 615Q850 650 825 684M1180 0Q1130 80 1160 150Q1220 225 1310 215Q1390 200 1410 80Q1420 30 1425 0M1210 0Q1160 70 1180 140Q1220 205 1300 200Q1380 190 1385 60L1400 0M1195 15L1205 40L1225 15L1230 35M1230 125Q1250 135 1270 122M1245 55Q1250 80 1270 70M1305 85L1330 65M1305 95L1330 103M1535 0L1515 45L1530 50L1505 110H1520L1498 190L1520 195L1535 180L1550 195L1568 170M1375 250Q1400 240 1405 205Q1415 245 1450 248Q1425 260 1420 270M1470 350Q1520 310 1568 308M1440 480L1490 550Q1510 570 1535 555L1568 520M1455 470L1525 545M1365 665Q1370 650 1390 660L1430 700M1110 790L1155 782L1160 860M1120 830Q1140 900 1160 975M1085 1040Q1120 980 1160 965Q1190 1000 1195 1090L1240 1075L1210 1010M1085 1040L1155 980M1040 700L1030 712L1045 715M10 1100L40 1072M60 1100L100 1075L120 1100M150 1075L200 1110M270 1075V1110M320 1072V1110M400 1072V1110M450 1075Q490 1080 480 1110M530 1072V1110M665 1072V1100L730 1072M855 1072Q840 1100 870 1110M920 1080Q930 1060 970 1064Q1020 1070 1025 1110"/>
        <circle cx="1550" cy="388" r="40"/><circle cx="1550" cy="388" r="24"/>
      </g>
    </svg>

    <div class="messages">
      <div class="msg in"><p>No</p><time>7:33 p. m.</time></div>
      <div class="msg out first"><p>No lo haré amor</p><time>7:35 p. m.</time><svg class="ticks" viewBox="0 0 44 28"><path d="M1.500 16.500L11 26L29 1.500M20.500 22L24.500 26L42.500 1.500"/></svg></div>
      <div class="msg out wide"><p>Tu me dejarias hacer un trío con otra</p><time>7:35 p. m.</time><svg class="ticks" viewBox="0 0 44 28"><path d="M1.500 16.500L11 26L29 1.500M20.500 22L24.500 26L42.500 1.500"/></svg></div>
      <div class="msg out wide"><p>Y me gustaría que hicieras eso por mi</p><time>7:36 p. m.</time><svg class="ticks" viewBox="0 0 44 28"><path d="M1.500 16.500L11 26L29 1.500M20.500 22L24.500 26L42.500 1.500"/></svg></div>
      <div class="msg in first long tall"><p>Si amor pero dejame pensarlo si <svg class="emoji" width="61" height="61" viewBox="0 0 60 60"><defs><radialGradient id="face" cx=".5" cy=".42" r=".6"><stop offset="0" stop-color="#ffe468"/><stop offset=".6" stop-color="#fdd04a"/><stop offset="1" stop-color="#f08a1c"/></radialGradient></defs><circle cx="30" cy="30" r="30" fill="url(#face)"/><path fill="none" stroke="#8a4b12" stroke-width="2.200" stroke-linecap="round" d="M7 19Q15 19 20 13M53 19Q45 19 40 13"/><circle cx="17.500" cy="30" r="9.300" fill="#2b2a2c"/><circle cx="42.500" cy="30" r="9.300" fill="#2b2a2c"/><ellipse cx="16" cy="26.500" rx="5.600" ry="5" fill="#d6d6d6"/><ellipse cx="41" cy="26.500" rx="5.600" ry="5" fill="#d6d6d6"/><circle cx="21.500" cy="33.500" r="2" fill="#fff"/><circle cx="46.500" cy="33.500" r="2" fill="#fff"/><path fill="none" stroke="#7a4312" stroke-width="2.600" stroke-linecap="round" d="M25.500 49.500Q30 45 34.500 49.500"/></svg> yo<br>como quiera tengo que consultarte</p><time>7:36 p. m.</time></div>
      <div class="msg out first wide"><p>Dime con quién nadamás y me cuentas</p><time>7:38 p. m.</time><svg class="ticks" viewBox="0 0 44 28"><path d="M1.500 16.500L11 26L29 1.500M20.500 22L24.500 26L42.500 1.500"/></svg></div>
      <div class="msg out"><p>Tienes mi permiso</p><time>7:39 p. m.</time><svg class="ticks" viewBox="0 0 44 28"><path d="M1.500 16.500L11 26L29 1.500M20.500 22L24.500 26L42.500 1.500"/></svg></div>
      <div class="msg in first long"><p>Es que no se amor ni siquiera tengo<br>amigos</p><time>7:39 p. m.</time></div>
      <div class="msg out first"><p>Nadie amor?</p><time>7:47 p. m.</time><svg class="ticks" viewBox="0 0 44 28"><path d="M1.500 16.500L11 26L29 1.500M20.500 22L24.500 26L42.500 1.500"/></svg></div>
      <div class="msg in first long"><p>No amor solo un amigo que es enfermero<br>pero no manches</p><time>7:47 p. m.</time></div>
      <div class="msg out first wide"><p>Bueno amor, ya dejo el tema entonces</p><time>7:47 p. m.</time><svg class="ticks" viewBox="0 0 44 28"><path d="M1.500 16.500L11 26L29 1.500M20.500 22L24.500 26L42.500 1.500"/></svg></div>
      <div class="msg in first"><p>Si lo hare amor</p><time>7:48 p. m.</time></div>
      <div class="msg in"><p>De eso no te preocupes</p><time>7:48 p. m.</time></div>
      <div class="msg in"><p>Yo me organizo</p><time>7:48 p. m.</time></div>
    </div>

    <div class="jump"><svg width="32" height="38" viewBox="0 0 32 38"><path d="M3 3L16 15.500L29 3M3 20L16 32.500L29 20"/></svg></div>

    <div class="composer">
      <div class="field">
        <svg class="sticker" width="56" height="56" viewBox="0 0 56 56"><path fill="none" stroke="#8d9598" stroke-width="5.400" stroke-linejoin="round" d="M30 53H20Q3 53 3 36V20Q3 3 20 3H36Q53 3 53 20V31Q52 37 45 44Q37 52 30 53ZM30 52V42Q30 32 40 31L52 30"/><path fill="#8d9598" d="M15 31Q22 34 38 31Q30 35 30 41Q18 42 15 31Z"/><circle cx="18" cy="19" r="4.500" fill="#8d9598"/><circle cx="38" cy="19" r="4.500" fill="#8d9598"/></svg>
        <span class="hint">Mensaje</span>
        <svg class="clip" width="36" height="56" viewBox="0 0 36 56"><path d="M33 14V38A15 15 0 0 1 2.700 38V14A10.500 10.500 0 0 1 23.700 14V36.500A5.700 5.700 0 0 1 12.300 36.500V14"/></svg>
        <svg class="camera" width="56" height="51" viewBox="0 0 56 51"><path d="M5 9H14L20 3H36L42 9H51Q53 9 53 11V46Q53 48 51 48H5Q3 48 3 46V11Q3 9 5 9Z"/><circle cx="28" cy="28.500" r="9.700"/></svg>
      </div>
      <div class="mic"><svg width="38" height="53" viewBox="0 0 38 53"><rect x="10.500" y="0" width="17" height="34" rx="8.500"/><path fill="none" stroke="#0a1014" stroke-width="5" stroke-linecap="round" d="M2.700 28.500A16.300 15 0 0 0 35.300 28.500M19 44V50.500"/></svg></div>
    </div>
  </main>

  <nav class="nav">
    <svg width="40" height="40" viewBox="0 0 40 40"><rect width="40" height="39.500" rx="6"/></svg>
    <svg width="54" height="54" viewBox="0 0 54 54"><circle cx="27" cy="27" r="24.800" fill="none" stroke="#999" stroke-width="4"/><circle cx="27" cy="27" r="14.800"/></svg>
    <svg width="37" height="46" viewBox="0 0 37 46"><path d="M1 21L34 .5Q37 -.5 37 3V43Q37 46.500 34 45.500L1 25Q-1 23 1 21Z"/></svg>
  </nav>
</div>
</body>
</html>
```
FILE: styles.css
```css
* { box-sizing: border-box; }

body {
  margin: 0;
  background: #0a1014;
  font-family: Roboto, sans-serif;
  color: #f7f8fa;
}

svg { display: block; flex: none; overflow: visible; }

.phone {
  display: flex;
  flex-direction: column;
  width: 1080px;
  height: 2400px;
  overflow: hidden;
}

/* Status bar and chat header */
.top {
  position: relative;
  flex: none;
  height: 247px;
  border-bottom: 2px solid #1b2125;
}

.status {
  display: flex;
  justify-content: space-between;
  height: 100px;
  padding: 40px 68px 0 55px;
  fill: #e9eaea;
  color: #e9eaea;
}

.status-left, .status-right { display: flex; align-items: flex-start; }
.clock { width: 147px; font-size: 37px; font-weight: 500; line-height: 44px; white-space: nowrap; }
.cloud { margin-top: 10px; }
.didi { margin: 6px 0 0 15px; }
.signal { margin: 5px 11px 0 0; }
.wifi { margin: 4px 15px 0 1px; }

.battery {
  position: relative;
  display: flex;
  align-items: center;
  width: 63px;
  height: 30px;
  margin-top: 5px;
  padding-left: 4px;
  border: 3px solid #e9eaea;
  border-radius: 9px;
  font-size: 22px;
  font-weight: 500;
  line-height: 24px;
}

.battery::after {
  content: "";
  position: absolute;
  left: 62px;
  top: 7px;
  width: 4px;
  height: 10px;
  border-radius: 2px;
  background: #e9eaea;
}

.charge { width: 7px; height: 18px; margin-right: 4px; border-radius: 2px; background: #e09b23; }

.bar {
  display: flex;
  align-items: center;
  justify-content: flex-end;
  height: 140px;
  padding-right: 55px;
  fill: #f7f8fa;
}

.call { margin: 0 77px 0 71px; }
.scribble { position: absolute; left: 0; top: 0; }

/* Conversation */
.conversation {
  position: relative;
  flex: 1;
  min-height: 0;
  overflow: hidden;
}

.wallpaper {
  position: absolute;
  inset: 0;
  fill: none;
  stroke: #20262a;
  stroke-width: 2.700px;
  stroke-linecap: round;
  stroke-linejoin: round;
}

.wallpaper path, .wallpaper circle, .wallpaper ellipse { vector-effect: non-scaling-stroke; }

.messages {
  position: relative;
  display: flex;
  flex-direction: column;
  height: 1870px;
  padding: 0 47px;
  overflow: hidden;
}

.msg {
  position: relative;
  display: flex;
  align-items: flex-end;
  flex: none;
  height: 90.400px;
  margin-top: 6px;
  border-radius: 30px;
}

.msg:first-child { margin-top: -51px; }
.msg.first { margin-top: 28px; }

.msg p {
  align-self: flex-start;
  margin: 0;
  font-size: 44px;
  line-height: 52px;
  white-space: nowrap;
}

.msg time {
  color: #a0a4a6;
  font-size: 33px;
  letter-spacing: .6px;
  line-height: 38px;
  white-space: nowrap;
}

.in {
  align-self: flex-start;
  gap: 39px;
  padding: 16px 24.500px 8px 27px;
  background: #1f272a;
}

.out {
  align-self: flex-end;
  column-gap: 24px;
  padding: 16px 24px 11px 27px;
  background: #144d37;
}

.out time { color: #a1b8af; }

.ticks {
  width: 44px;
  height: 28px;
  margin: 0 0 7px -11.500px;
  fill: none;
  stroke: #a1b8af;
  stroke-width: 3.800px;
}

.out.wide { display: grid; grid-template-columns: 1fr auto auto; align-content: space-between; align-items: end; height: 137px; }
.wide p { grid-column: 1 / -1; margin-right: 8px; }
.wide time { grid-column: 2; }

.long { justify-content: space-between; width: 877px; height: 141.500px; }
.long p { margin-right: -200px; }
.tall { height: 207.500px; padding-top: 22px; }
.tall p { line-height: 62.500px; }

.emoji { display: inline-block; margin: 0 2px 0 4px; vertical-align: -16px; }

.in.first { border-top-left-radius: 0; }
.out.first { border-top-right-radius: 0; }

.first::after {
  content: "";
  position: absolute;
  top: 0;
  width: 20px;
  height: 29px;
  background: inherit;
  clip-path: path("M0 0H14Q20 0 19.500 5Q19 7.500 17 10L0 29Z");
}

.out.first::after { right: -20px; }
.in.first::after { left: -20px; transform: scaleX(-1); }

.jump {
  position: absolute;
  right: 33px;
  top: 1738px;
  display: flex;
  align-items: center;
  justify-content: center;
  width: 88px;
  height: 88px;
  border-radius: 50%;
  background: #27343b;
}

.jump svg { margin-top: 10px; }
.jump path { fill: none; stroke: #9aa3a8; stroke-width: 5.500px; stroke-linecap: round; stroke-linejoin: round; }

/* Message composer */
.composer {
  position: relative;
  display: flex;
  gap: 13px;
  padding: 11px 12px 0 13px;
}

.field {
  display: flex;
  align-items: center;
  width: 913px;
  height: 129px;
  padding: 2px 38px 0 31px;
  border-radius: 65px;
  background: #1f272a;
}

.hint { flex: 1; margin-left: 32px; font-size: 49.500px; letter-spacing: .4px; line-height: 60px; color: #8d9598; }
.clip { margin: 0 82px 2px 0; fill: none; stroke: #8d9598; stroke-width: 5.400px; stroke-linecap: round; }
.camera { margin-top: 1px; fill: none; stroke: #8d9598; stroke-width: 5.600px; stroke-linejoin: round; }

.mic {
  display: flex;
  align-items: center;
  justify-content: center;
  width: 129px;
  height: 129px;
  margin-top: 1px;
  border-radius: 50%;
  background: #23c263;
  fill: #0a1014;
}

/* System navigation */
.nav {
  display: flex;
  align-items: center;
  justify-content: space-between;
  flex: none;
  height: 130px;
  padding: 0 290px 0 286px;
  background: #000;
  fill: #999;
}
```
